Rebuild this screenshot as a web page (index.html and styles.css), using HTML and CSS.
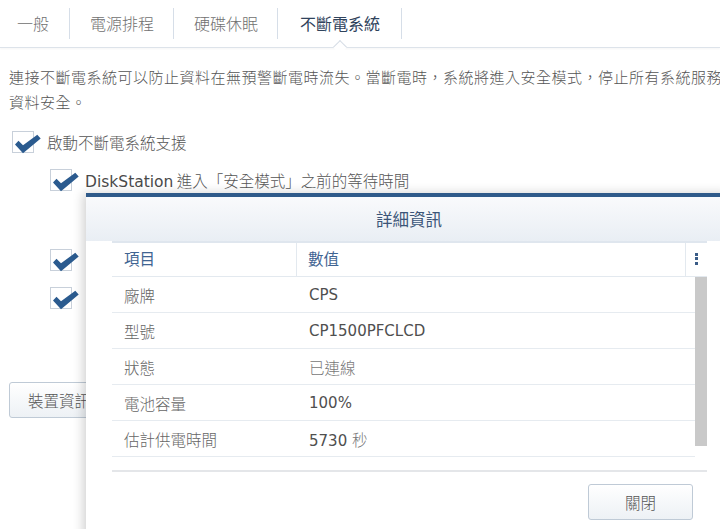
FILE: index.html
```html
<!DOCTYPE html>
<html lang="zh-Hant">
<head>
<meta charset="utf-8">
<link rel="stylesheet" href="styles.css">
</head>
<body>
<div class="page">
  <nav class="tabs">
    <div class="tab first">一般</div>
    <div class="tab">電源排程</div>
    <div class="tab">硬碟休眠</div>
    <div class="tab active">不斷電系統</div>
  </nav>
  <main class="content">
    <p class="desc">連接不斷電系統可以防止資料在無預警斷電時流失。當斷電時，系統將進入安全模式，停止所有系統服務，以確保<br>資料安全。</p>
    <label class="check-row r1">
      <span class="box"><svg viewBox="0 0 28 24" width="28" height="24"><path d="M2 11.5 L5.5 7.8 L10 12.2 L24.3 1.8 L27.7 5.6 L10 20.3 Z" fill="#2b5b8f"/></svg></span>
      <span class="label">啟動不斷電系統支援</span>
    </label>
    <div class="indent">
      <label class="check-row r2">
        <span class="box"><svg viewBox="0 0 28 24" width="28" height="24"><path d="M2 11.5 L5.5 7.8 L10 12.2 L24.3 1.8 L27.7 5.6 L10 20.3 Z" fill="#2b5b8f"/></svg></span>
        <span class="label"><span class="lat">DiskStation</span> 進入「安全模式」之前的等待時間</span>
      </label>
      <label class="check-row r3">
        <span class="box"><svg viewBox="0 0 28 24" width="28" height="24"><path d="M2 11.5 L5.5 7.8 L10 12.2 L24.3 1.8 L27.7 5.6 L10 20.3 Z" fill="#2b5b8f"/></svg></span>
        <span class="label"></span>
      </label>
      <label class="check-row r4">
        <span class="box"><svg viewBox="0 0 28 24" width="28" height="24"><path d="M2 11.5 L5.5 7.8 L10 12.2 L24.3 1.8 L27.7 5.6 L10 20.3 Z" fill="#2b5b8f"/></svg></span>
        <span class="label"></span>
      </label>
    </div>
    <button class="btn info">裝置資訊</button>
  </main>

  <section class="dialog">
    <header class="dlg-title">詳細資訊</header>
    <div class="grid">
      <div class="ghead">
        <div class="gc c1">項目</div>
        <div class="gc c2">數值</div>
        <div class="gc c3"><span class="dots"><i></i><i></i><i></i></span></div>
      </div>
      <div class="gbody">
        <div class="rows">
          <div class="row"><div class="c1">廠牌</div><div class="c2 v">CPS</div></div>
          <div class="row"><div class="c1">型號</div><div class="c2 v">CP1500PFCLCD</div></div>
          <div class="row"><div class="c1">狀態</div><div class="c2 v cjk">已連線</div></div>
          <div class="row"><div class="c1">電池容量</div><div class="c2 v">100%</div></div>
          <div class="row"><div class="c1">估計供電時間</div><div class="c2 v">5730 <span class="cjk">秒</span></div></div>
        </div>
        <div class="scroll"><div class="thumb"></div></div>
      </div>
    </div>
    <footer class="dlg-foot">
      <button class="btn close">關閉</button>
    </footer>
  </section>
</div>
</body>
</html>
```

FILE: styles.css
```css
html, body {
  margin: 0;
  padding: 0;
  width: 720px;
  height: 529px;
  overflow: hidden;
  background: #fff;
}
body {
  font-family: "Noto Sans CJK TC", "Noto Sans", sans-serif;
  color: #555;
}
.page {
  position: relative;
  width: 720px;
  height: 529px;
  overflow: hidden;
}
.tabs {
  display: flex;
  height: 47px;
  border-bottom: 1px solid #dde3ea;
  box-shadow: 0 1px 2px rgba(0,0,0,0.04);
  align-items: center;
}
.tab {
  position: relative;
  height: 47px;
  line-height: 47px;
  padding: 0 20px;
  font-size: 16px;
  color: #707070;
  font-weight: 300;
  white-space: nowrap;
}
.tab.first { padding-left: 17px; padding-right: 21px; }
.tab::after {
  content: "";
  position: absolute;
  right: 0;
  top: 8px;
  bottom: 8px;
  width: 1px;
  background: #d6dee8;
}
.tab.active { color: #30435c; font-weight: 400; padding-left: 22px; padding-right: 22px; }
.tab.active::before {
  content: "";
  position: absolute;
  left: 50%;
  bottom: -5px;
  width: 9px;
  height: 9px;
  margin-left: -5px;
  background: #fff;
  border-top: 1px solid #d6dde6;
  border-left: 1px solid #d6dde6;
  transform: rotate(45deg);
}
.content {
  padding: 16px 0 0 9px;
}
.desc {
  margin: 0;
  font-size: 15px;
  line-height: 25px;
  white-space: nowrap;
  color: #555;
  font-weight: 300;
  letter-spacing: 0.5px;
}
.check-row {
  display: flex;
  align-items: center;
  height: 24px;
}
.box {
  position: relative;
  width: 22px;
  height: 22px;
  box-sizing: border-box;
  border: 1px solid #c8d0da;
  background: #fff;
  flex: none;
}
.box svg {
  position: absolute;
  left: 0;
  top: 1px;
}
.label {
  margin-left: 13px;
  font-size: 15.5px;
  color: #555;
  font-weight: 300;
  white-space: nowrap;
}
.lat {
  font-family: "DejaVu Sans", sans-serif;
  font-weight: 400;
  color: #4a4a4a;
  font-size: 15.5px;
}
.r1 { margin-top: 16px; margin-left: 3px; }
.indent { margin-left: 41px; }
.r2 { margin-top: 14px; }
.r3 { margin-top: 56px; }
.r4 { margin-top: 14px; }
.btn {
  font-family: "Noto Sans CJK TC", sans-serif;
  font-size: 15.5px;
  font-weight: 300;
  color: #555;
  border: 1px solid #bfcad6;
  border-radius: 3px;
  background: linear-gradient(#ffffff, #edf1f5);
  height: 36px;
  padding: 0;
}
.info {
  display: block;
  margin-top: 72px;
  width: 120px;
  text-align: left;
  padding-left: 18px;
}
.dialog {
  position: absolute;
  left: 86px;
  top: 193px;
  width: 646px;
  height: 345px;
  background: #fff;
  border-top: 4px solid #2f5a8a;
  box-shadow: -3px 0 10px rgba(0,0,0,0.18);
}
.dlg-title {
  height: 44px;
  line-height: 44px;
  text-align: center;
  font-size: 16.5px;
  color: #3b5578;
  background: linear-gradient(#f9fafc, #e9eef4);
}
.grid {
  margin: 0 25px 0 26px;
}
.ghead {
  display: flex;
  height: 33px;
  border-top: 2px solid #dfe6ee;
  border-bottom: 1px solid #e3e9ef;
  font-size: 15.5px;
  color: #3f6492;
}
.gc {
  line-height: 30px;
  box-sizing: border-box;
}
.ghead .c1 { width: 185px; padding-left: 12px; border-right: 1px solid #e3e9ef; }
.ghead .c2 { flex: 1; padding-left: 11px; border-right: 1px solid #e3e9ef; }
.ghead .c3 { width: 21px; display: flex; align-items: center; justify-content: center; }
.dots { display: flex; flex-direction: column; gap: 1.5px; margin-top: -2px; }
.dots i { display: block; width: 3px; height: 3px; background: #3a5c87; }
.gbody {
  display: flex;
  height: 193px;
  border-bottom: 2px solid #e4e6e9;
}
.rows { flex: 1; }
.row {
  display: flex;
  height: 35px;
  line-height: 36px;
  border-bottom: 1px solid #e6ebf0;
  font-size: 15.5px;
}
.row .c1 { width: 185px; padding-left: 12px; box-sizing: border-box; color: #666; font-weight: 300; }
.row .c2 { padding-left: 12px; }
.v {
  font-family: "DejaVu Sans", "Noto Sans CJK TC", sans-serif;
  font-size: 15px;
  color: #4f4f4f;
}
.cjk { font-family: "Noto Sans CJK TC", sans-serif; color: #777; font-weight: 300; font-size: 15.5px; }
.scroll { width: 12px; }
.thumb { height: 169px; background: #c9c9c9; }
.dlg-foot {
  display: flex;
  justify-content: flex-end;
  padding: 12px 39px 0 0;
}
.close {
  width: 105px;
  text-align: center;
}
```
